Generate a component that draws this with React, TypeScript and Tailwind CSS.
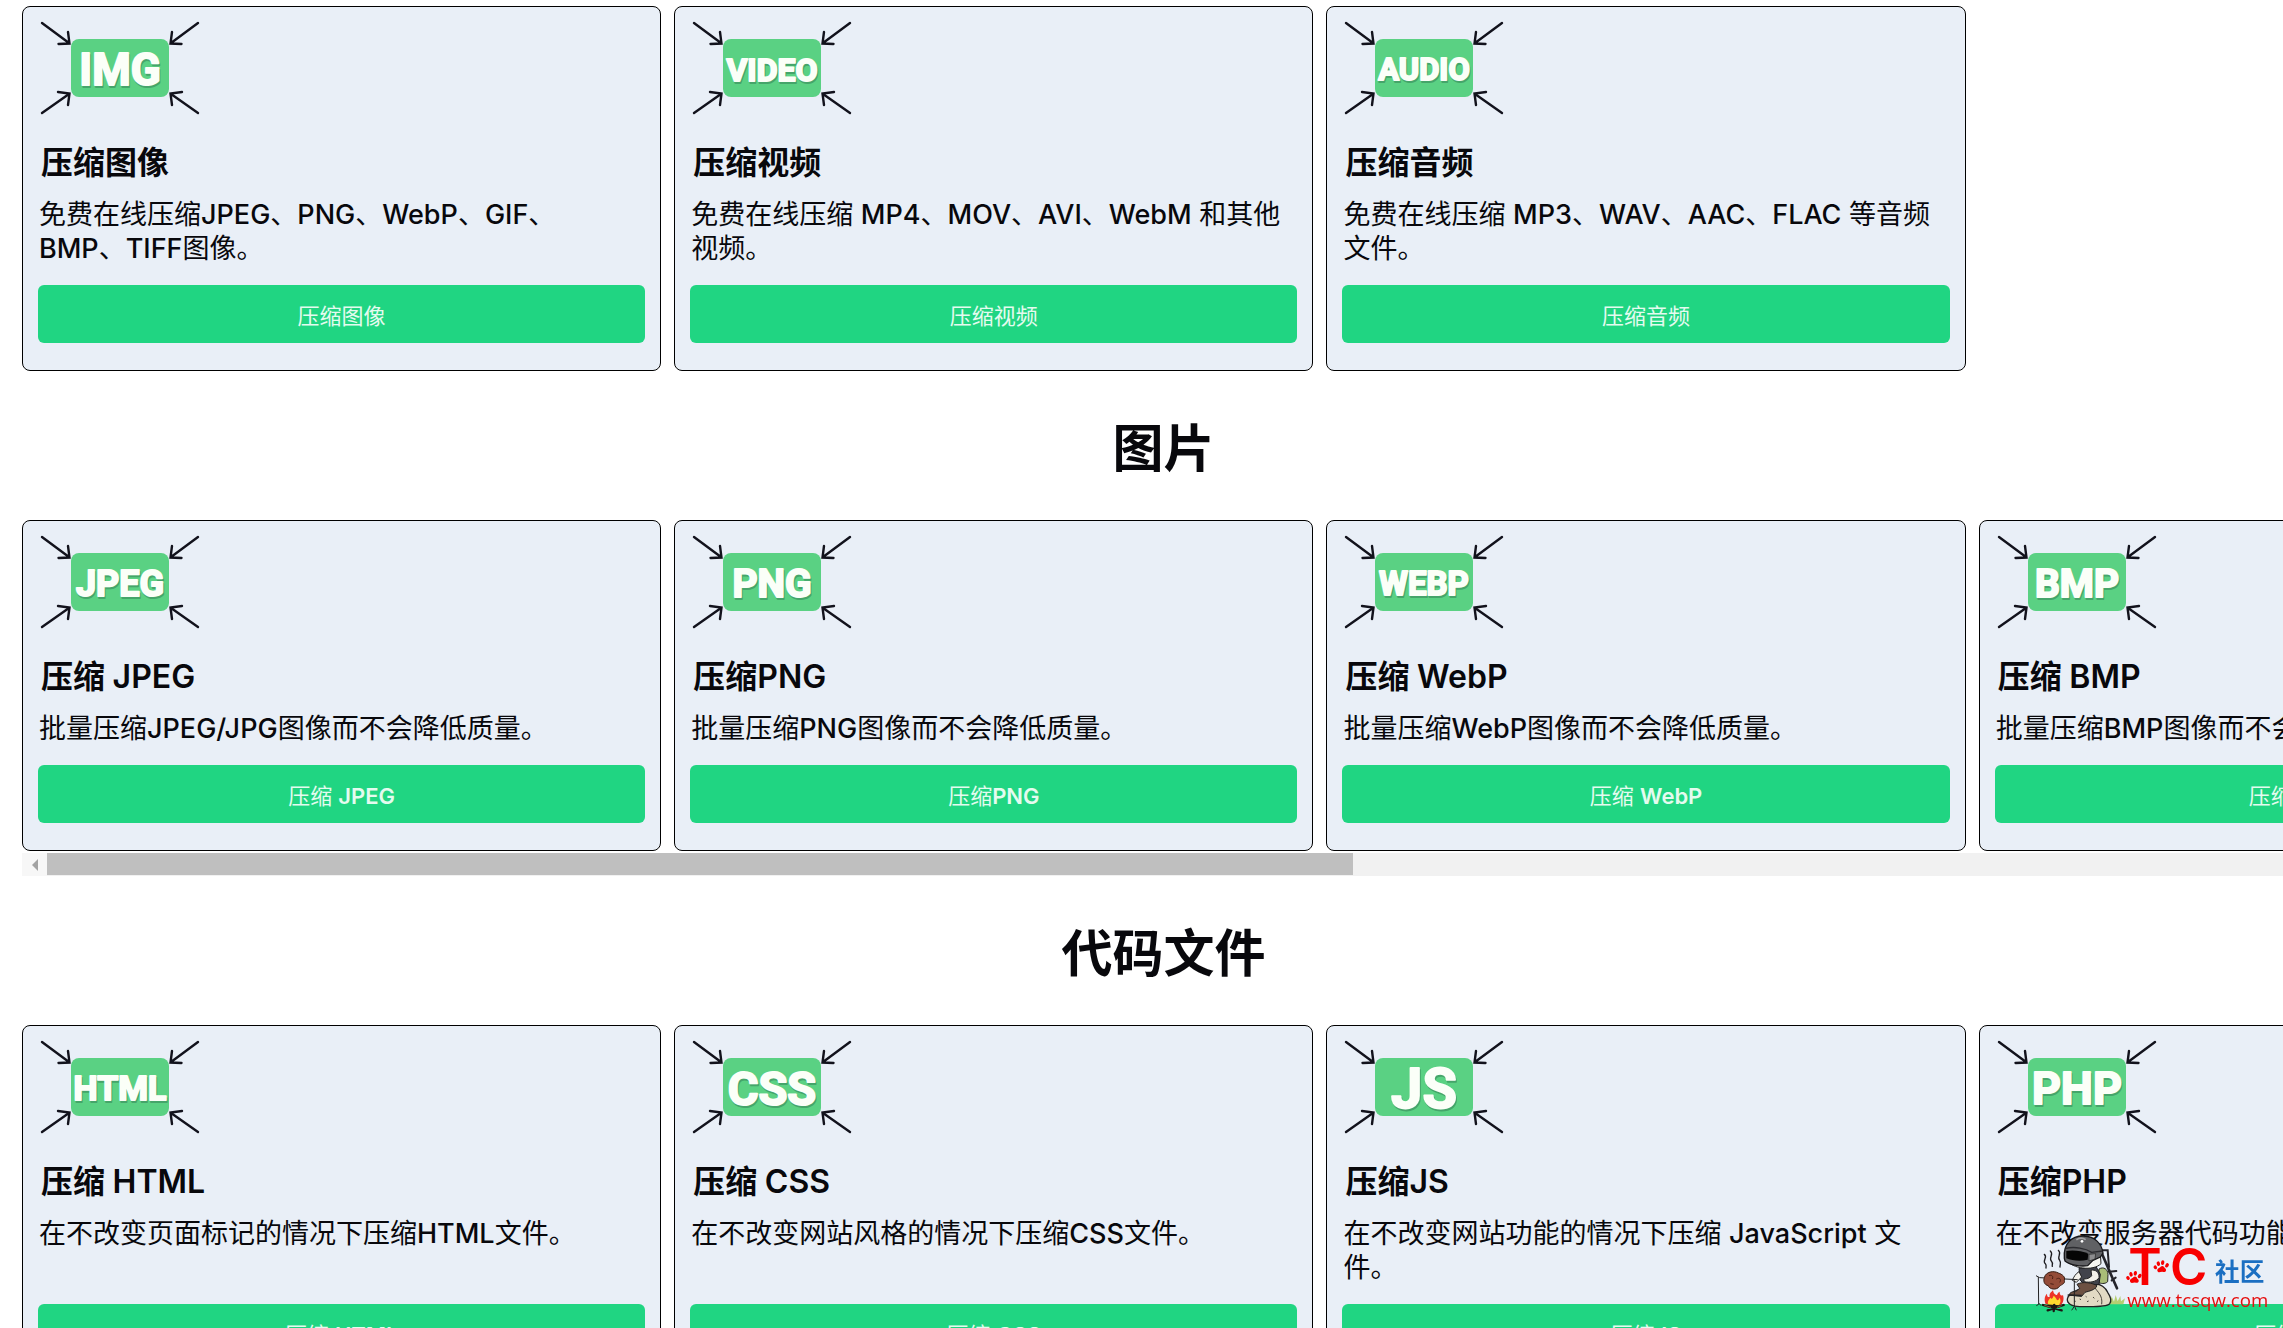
interface Tool {
  badge: string;
  badgeSize: number;
  title: string;
  text: string;
}

interface Section {
  heading?: string;
  scrollable?: boolean;
  tools: Tool[];
}

const SECTIONS: Section[] = [
  {
    tools: [
      { badge: "IMG", badgeSize: 44, title: "压缩图像", text: "免费在线压缩JPEG、PNG、WebP、GIF、\nBMP、TIFF图像。" },
      { badge: "VIDEO", badgeSize: 32, title: "压缩视频", text: "免费在线压缩 MP4、MOV、AVI、WebM 和其他视频。" },
      { badge: "AUDIO", badgeSize: 31, title: "压缩音频", text: "免费在线压缩 MP3、WAV、AAC、FLAC 等音频文件。" },
    ],
  },
  {
    heading: "图片",
    scrollable: true,
    tools: [
      { badge: "JPEG", badgeSize: 36, title: "压缩 JPEG", text: "批量压缩JPEG/JPG图像而不会降低质量。" },
      { badge: "PNG", badgeSize: 39, title: "压缩PNG", text: "批量压缩PNG图像而不会降低质量。" },
      { badge: "WEBP", badgeSize: 33, title: "压缩 WebP", text: "批量压缩WebP图像而不会降低质量。" },
      { badge: "BMP", badgeSize: 39, title: "压缩 BMP", text: "批量压缩BMP图像而不会降低质量。" },
    ],
  },
  {
    heading: "代码文件",
    tools: [
      { badge: "HTML", badgeSize: 34, title: "压缩 HTML", text: "在不改变页面标记的情况下压缩HTML文件。" },
      { badge: "CSS", badgeSize: 47, title: "压缩 CSS", text: "在不改变网站风格的情况下压缩CSS文件。" },
      { badge: "JS", badgeSize: 56, title: "压缩JS", text: "在不改变网站功能的情况下压缩 JavaScript 文件。" },
      { badge: "PHP", badgeSize: 45, title: "压缩PHP", text: "在不改变服务器代码功能的情况下压缩PHP文件。" },
    ],
  },
];

function MixedText({ text, latinClass }: { text: string; latinClass: string }) {
  return text.split(/([A-Za-z0-9/]+)/).map((run, i) =>
    i % 2 === 1 ? (
      <span key={i} className={latinClass}>
        {run}
      </span>
    ) : (
      run
    ),
  );
}

function ToolIcon({ label, size }: { label: string; size: number }) {
  // baseline that centres capitals on the badge
  const y = 48 + size * 0.36;
  return (
    <svg width="160" height="94" viewBox="0 0 160 94" aria-hidden="true">
      <g fill="none" stroke="#12121c" strokeWidth="2.4" strokeLinecap="round">
        <path d="M2 2 L29 22 M28 11 L29.500 22.500 L18.500 23" />
        <path d="M158 2 L131 22 M132 11 L130.500 22.500 L141.500 23" />
        <path d="M2 92 L29 73 M18 71 L29.500 72.500 L28 84" />
        <path d="M158 92 L131 73 M142 71 L130.500 72.500 L132 84" />
      </g>
      <rect x="31" y="18" width="98" height="58" rx="8" fill="#5ad183" />
      <g
        textAnchor="middle"
        fontSize={size}
        strokeWidth="2"
        strokeLinejoin="round"
        className="font-['Roboto',sans-serif] font-bold"
      >
        <text x="81" y={y + 2} fill="#45a56a" stroke="#45a56a">{label}</text>
        <text x="80" y={y} fill="#fbfff8" stroke="#fbfff8">{label}</text>
      </g>
    </svg>
  );
}

function ToolCard({ tool }: { tool: Tool }) {
  return (
    <article className="flex w-[28%] shrink-0 flex-col rounded-lg border border-black bg-[#e9eff7] px-[15px] pt-[14px] pb-[27px]">
      <div className="pl-0.5">
        <ToolIcon label={tool.badge} size={tool.badgeSize} />
      </div>
      <h3 className="mt-7 pl-[3px] text-[32px] leading-10 font-bold">
        <MixedText text={tool.title} latinClass="font-semibold" />
      </h3>
      <p className="mt-[15px] mb-[19px] px-px text-[27px] leading-[34px] whitespace-pre-line">
        <MixedText text={tool.text} latinClass="font-medium" />
      </p>
      <button className="mt-auto h-[58px] w-full rounded-md bg-[#20d582] pt-1 text-[22px] text-[#e4fbef]">
        <MixedText text={tool.title} latinClass="font-semibold" />
      </button>
    </article>
  );
}

function ScrollBar() {
  return (
    <div className="mt-0.5 flex h-[23px] w-full bg-[#f1f1f1]">
      <button aria-label="向左滚动" className="flex w-[25px] items-center justify-center bg-[#f7f7f7]">
        <svg width="6" height="12" viewBox="0 0 6 12">
          <path d="M6 0 V12 L0 6 Z" fill="#a3a3a3" />
        </svg>
      </button>
      <div className="mb-px w-[1306px] bg-[#bfbfbf]" />
    </div>
  );
}

function Paw({ x, y }: { x: number; y: number }) {
  return (
    <g transform={`translate(${x} ${y})`} fill="#f80000">
      <path d="M-12 11 C-13 3 -5 3 -2 -1 C3 -6 9 -2 10 3 C18 8 14 17 5 15 C-2 13 -9 20 -12 11 Z" />
      <ellipse cx="-18" cy="1" rx="5" ry="6" transform="rotate(-35 -18 1)" />
      <ellipse cx="-9" cy="-10" rx="5" ry="7" transform="rotate(-15 -9 -10)" />
      <ellipse cx="4" cy="-13" rx="5" ry="7" transform="rotate(10 4 -13)" />
      <ellipse cx="17" cy="-5" rx="5" ry="7" transform="rotate(35 17 -5)" />
    </g>
  );
}

function SiteLogo() {
  return (
    <svg
      width="240"
      height="82"
      viewBox="160 95 720 246"
      className="fixed right-2.5 bottom-3.5"
      role="img"
      aria-label="TC社区"
    >
      {/* grass */}
      <path d="M390 312 L396 288 L403 304 L408 284 L414 303 L422 287 L424 303 L436 294 L431 312 Z" fill="#b5cf72" />
      {/* rifle */}
      <g stroke="#24242a" strokeLinecap="round" fill="none">
        <path d="M366 150 L384 150 L388 200" strokeWidth="6" />
        <path d="M366 158 L398 232 L412 264" strokeWidth="8" />
        <path d="M388 214 L410 212 M396 240 L408 232" strokeWidth="6" />
      </g>
      {/* rock */}
      <path
        d="M263 296 C264 282 284 274 300 266 L346 251 C362 250 378 262 384 276 C392 288 398 300 390 310 C378 322 332 318 300 319 C276 318 262 310 263 296 Z"
        fill="#e2dac4"
        stroke="#222"
        strokeWidth="4"
      />
      <path d="M346 262 C352 274 370 284 366 312 M300 296 L304 298 M322 304 L327 302 M340 290 L344 294 M352 304 L356 301 M318 288 L321 290 M284 302 L288 303" fill="none" stroke="#4a453d" strokeWidth="3" />
      {/* backpack */}
      <path d="M358 206 C372 198 384 206 385 222 L384 244 C376 252 362 250 356 246 Z" fill="#a9bd78" stroke="#222" strokeWidth="3" />
      {/* torso and arms */}
      <path d="M298 204 L350 200 L362 222 L358 252 L318 256 L302 240 Z" fill="#41434b" stroke="#1c1c20" strokeWidth="3" />
      <path d="M334 210 C346 206 360 216 358 232 C352 244 330 248 314 244 L312 236 C324 236 332 232 336 226 Z" fill="#f3f1ea" stroke="#222" strokeWidth="3" />
      <path d="M298 214 C288 220 282 230 278 240 L290 246 L306 230 Z" fill="#f3f1ea" stroke="#222" strokeWidth="3" />
      {/* legs */}
      <path d="M292 252 C308 242 340 248 352 256 C346 270 328 272 316 276 L306 288 L270 284 C268 276 280 274 290 272 L300 264 Z" fill="#6d5142" stroke="#222" strokeWidth="3" />
      <path d="M264 284 L306 286" stroke="#222" strokeWidth="5" />
      {/* helmet */}
      <path d="M262 180 C276 204 340 214 364 190 L362 160 L262 158 Z" fill="#f5f5f0" stroke="#222" strokeWidth="3" />
      <path
        d="M254 174 C250 130 276 106 312 107 C346 108 366 130 370 158 L362 170 L340 180 L324 196 C300 200 268 192 256 182 Z"
        fill="#606164"
        stroke="#17171a"
        strokeWidth="4"
      />
      <path d="M260 152 C282 148 306 152 326 160 L324 178 C300 184 276 180 260 174 Z" fill="#050505" />
      <path d="M258 144 C286 138 318 144 336 156 L368 152" fill="none" stroke="#2c2c30" strokeWidth="4" />
      <path d="M328 162 L348 160 L346 176 L328 182 Z" fill="#8c8c8e" stroke="#222" strokeWidth="2" />
      <path d="M290 118 C300 112 312 114 318 118" fill="none" stroke="#a4a4a6" strokeWidth="5" />
      <circle cx="307" cy="123" r="4" fill="#fff" />
      {/* steam */}
      <path
        d="M194 162 C206 170 186 182 197 190 C202 196 198 200 199 203 M212 152 C224 162 206 172 215 182 C222 190 216 194 218 198 M236 150 C248 160 230 170 240 180 C246 188 240 194 241 200"
        fill="none"
        stroke="#1c1c20"
        strokeWidth="4"
        strokeLinecap="round"
      />
      {/* spit */}
      <path d="M169 226 L180 232 L294 238 M176 230 L177 312 L170 316 M177 308 L184 316 M284 240 L284 318 L276 330 M284 316 L290 330" fill="none" stroke="#222" strokeWidth="3" />
      <path d="M194 232 C198 214 222 210 236 218 C248 222 258 230 254 240 C258 252 242 252 236 262 C222 272 206 262 206 256 C194 254 190 242 194 232 Z" fill="#944c38" stroke="#34190f" strokeWidth="3" />
      <path d="M208 226 C216 222 222 228 218 236 M230 236 C240 230 246 238 240 246 M212 250 L222 252" fill="none" stroke="#4b2015" strokeWidth="3" />
      {/* fire */}
      <path d="M198 312 C192 296 196 286 202 280 C202 290 206 290 210 290 C208 280 214 276 220 270 C222 282 228 284 232 284 C234 278 236 276 240 274 C240 284 244 288 250 284 C254 298 250 308 244 314 Z" fill="#ed3328" />
      <path d="M206 314 C202 302 208 298 212 292 C216 300 220 292 222 286 C230 292 230 298 234 300 C238 298 240 292 240 292 C246 304 240 310 236 316 Z" fill="#ffd92e" />
      <g stroke="#1c1714" strokeWidth="7" strokeLinecap="round">
        <path d="M190 314 L246 330 M252 314 L204 330 M206 316 L240 318 M224 314 L222 332" />
      </g>
      <path d="M194 315 L214 321 M246 316 L232 321" stroke="#8b5f42" strokeWidth="3" />

      <g fill="#f80000" fontSize="152" className="font-['Inter',sans-serif] font-semibold">
        <text x="446" y="254">T</text>
        <text x="571" y="254">C</text>
      </g>
      <Paw x={463} y={232} />
      <Paw x={545} y={200} />
      <text x="706" y="241" fontSize="74" fill="#1b6fc2" className="font-['Noto_Sans_CJK_SC',sans-serif] font-bold">
        社区
      </text>
      <text x="443" y="320" fontSize="56" fill="#e60d0d" className="font-['Open_Sans',sans-serif] font-medium">
        www.tcsqw.com
      </text>
    </svg>
  );
}

export default function App() {
  return (
    <div className="h-screen w-full overflow-hidden bg-white pt-1.5 pl-[22px] font-['Inter','Noto_Sans_CJK_SC',sans-serif] text-[#08080c]">
      <main className="w-[100vw]">
        {SECTIONS.map((section, i) => (
          <section key={i}>
            {section.heading && (
              <h2 className="pt-12 pb-[41px] text-center text-[51px] leading-[60px] font-bold">{section.heading}</h2>
            )}
            <div className="flex gap-[13px]">
              {section.tools.map((tool) => (
                <ToolCard key={tool.badge} tool={tool} />
              ))}
            </div>
            {section.scrollable && <ScrollBar />}
          </section>
        ))}
      </main>
      <SiteLogo />
    </div>
  );
}
